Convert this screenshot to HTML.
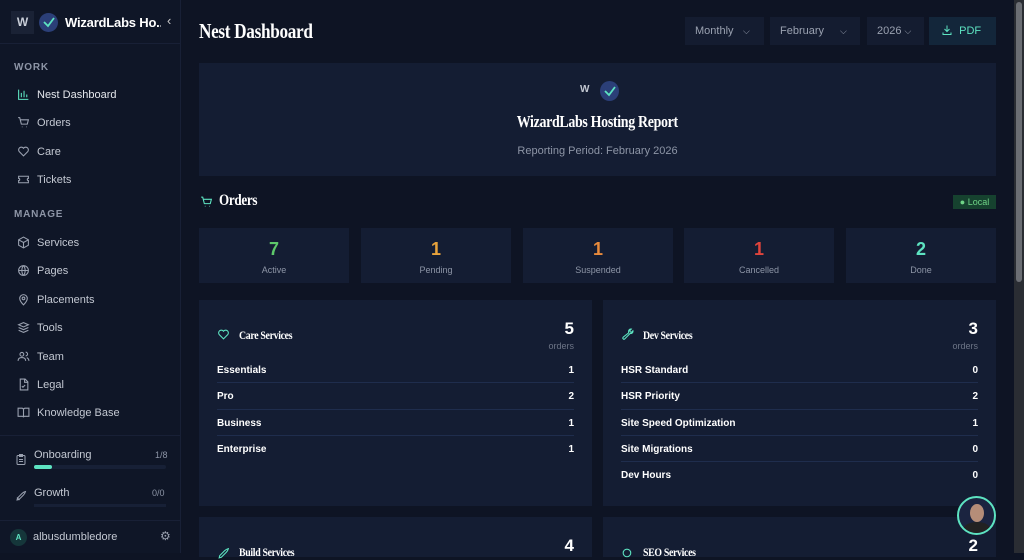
<!DOCTYPE html>
<html><head><meta charset="utf-8"><style>
*{box-sizing:border-box;margin:0;padding:0}
body{width:1024px;height:553px;overflow:hidden;background:#0e1424;font-family:"Liberation Sans",sans-serif;color:#d5d9e2;position:relative}
.sb{position:absolute;left:0;top:0;width:181px;height:553px;background:#0f1627;border-right:1px solid #182036}
.logo{position:absolute;top:11px;left:11px;width:23px;height:23px;background:#1a2235;color:#c9ced8;font-weight:bold;font-size:12px;text-align:center;line-height:23px}
.lc{position:absolute;top:13px;left:39px;width:19px;height:19px;border-radius:50%;background:#2b3f78}
.brand{position:absolute;top:15px;left:65px;font-weight:bold;font-size:13px;color:#fff;width:96px;white-space:nowrap;overflow:hidden;letter-spacing:-.2px}
.sec{position:absolute;left:14px;font-size:10px;letter-spacing:.8px;color:#8d95a6;font-weight:bold}
.it{position:absolute;left:17px;font-size:11px;color:#c3c8d2;display:flex;align-items:center}
.it svg{width:13px;height:13px;margin-right:7px;stroke:#9aa1b0;fill:none;stroke-width:2}
.serif{font-family:"Liberation Serif",serif;font-weight:bold;color:#fff;display:inline-block;transform:scaleX(.82);transform-origin:left;letter-spacing:-.4px;white-space:nowrap}
.ctr{transform-origin:center}
.btn{position:absolute;top:17px;height:28px;background:#141c30;font-size:11px;color:#9aa1b0;line-height:28px;padding-left:10px}
.card{position:absolute;background:#141d33}
.st{position:absolute;top:228px;width:150px;height:55px;background:#141d33;text-align:center}
.st b{display:block;font-size:18px;margin-top:11px;font-weight:900}
.st span{font-size:9px;color:#8d95a6}
.row{display:flex;justify-content:space-between;font-size:10px;font-weight:bold;color:#fff;height:26.3px;line-height:28px;border-bottom:1px solid #1f2d4d}
.row:last-child{border-bottom:none}
</style></head><body>
<div class="sb">
<div class="logo">W</div><div class="lc"><svg width="19" height="19"><path d="M5 9l4 4 6-8" stroke="#5de3c1" stroke-width="1.8" fill="none"/></svg></div>
<div class="brand">WizardLabs Ho...</div><div style="position:absolute;left:167px;top:13px;color:#ccc;font-size:13px">‹</div>
<div style="position:absolute;top:43px;left:0;width:181px;border-top:1px solid #182036"></div>
<div class="sec" style="top:62px">WORK</div>
<div class="it" style="top:88px;color:#e4e7ec"><svg viewBox="0 0 24 24" style="stroke:#5de3c1"><path d="M3 3v18h18M8 17V9M13 17V5M18 17v-5"/></svg>Nest Dashboard</div>
<div class="it" style="top:116px"><svg viewBox="0 0 24 24"><path d="M2 3h3l3 12h11l2-8H6M9 20h1M17 20h1"/></svg>Orders</div>
<div class="it" style="top:145px"><svg viewBox="0 0 24 24"><path d="M12 20l-8-8a5 5 0 018-6 5 5 0 018 6z"/></svg>Care</div>
<div class="it" style="top:173px"><svg viewBox="0 0 24 24"><path d="M3 6h18v4a2 2 0 000 4v4H3v-4a2 2 0 000-4z"/></svg>Tickets</div>
<div class="sec" style="top:209px">MANAGE</div>
<div class="it" style="top:236px"><svg viewBox="0 0 24 24"><path d="M12 2l9 5v10l-9 5-9-5V7zM3 7l9 5 9-5M12 12v10"/></svg>Services</div>
<div class="it" style="top:264px"><svg viewBox="0 0 24 24"><circle cx="12" cy="12" r="9"/><path d="M3 12h18M12 3c4 4 4 14 0 18M12 3c-4 4-4 14 0 18"/></svg>Pages</div>
<div class="it" style="top:293px"><svg viewBox="0 0 24 24"><path d="M12 22s7-7 7-12a7 7 0 00-14 0c0 5 7 12 7 12z"/><circle cx="12" cy="10" r="2.5"/></svg>Placements</div>
<div class="it" style="top:321px"><svg viewBox="0 0 24 24"><path d="M12 3l9 4-9 4-9-4zM3 12l9 4 9-4M3 17l9 4 9-4"/></svg>Tools</div>
<div class="it" style="top:350px"><svg viewBox="0 0 24 24"><circle cx="9" cy="8" r="3.5"/><path d="M2 20c0-4 3-6 7-6s7 2 7 6M16 4a3.5 3.5 0 010 7M22 20c0-3-2-5-4-6"/></svg>Team</div>
<div class="it" style="top:378px"><svg viewBox="0 0 24 24"><path d="M6 2h9l5 5v15H6zM14 2v6h6M9 15l2 2 4-4"/></svg>Legal</div>
<div class="it" style="top:406px"><svg viewBox="0 0 24 24"><path d="M2 4h7a3 3 0 013 3v14a2 2 0 00-2-2H2zM22 4h-7a3 3 0 00-3 3v14a2 2 0 012-2h8z"/></svg>Knowledge Base</div>
<div style="position:absolute;top:435px;left:0;width:181px;border-top:1px solid #182036"></div>
<svg style="position:absolute;left:15px;top:453px" width="12" height="13" viewBox="0 0 24 24" fill="none" stroke="#9aa1b0" stroke-width="2"><rect x="4" y="4" width="16" height="18" rx="2"/><path d="M9 2h6v4H9zM8 12h8M8 16h8"/></svg>
<div style="position:absolute;left:34px;top:449px;font-size:11px;color:#c3c8d2">Onboarding</div>
<div style="position:absolute;left:155px;top:450px;font-size:9px;color:#8d95a6">1/8</div>
<div style="position:absolute;left:34px;top:465px;width:132px;height:4px;background:#172036;border-radius:2px"><div style="width:18px;height:4px;background:#5de3c1;border-radius:2px"></div></div>
<svg style="position:absolute;left:15px;top:490px" width="12" height="12" viewBox="0 0 24 24" fill="none" stroke="#9aa1b0" stroke-width="2"><path d="M4 20l4-1 9-9c3-3 4-7 4-7s-4 1-7 4l-9 9zM4 15l5 5"/></svg>
<div style="position:absolute;left:34px;top:487px;font-size:11px;color:#c3c8d2">Growth</div>
<div style="position:absolute;left:152px;top:488px;font-size:9px;color:#8d95a6">0/0</div>
<div style="position:absolute;left:34px;top:504px;width:132px;height:3px;background:#172036"></div>
<div style="position:absolute;top:520px;left:0;width:181px;border-top:1px solid #182036"></div>
<div style="position:absolute;left:10px;top:529px;width:17px;height:17px;border-radius:50%;background:#15363a;color:#5de3c1;font-size:8px;text-align:center;line-height:17px;font-weight:bold">A</div>
<div style="position:absolute;left:33px;top:531px;font-size:11px;color:#c3c8d2">albusdumbledore</div>
<div style="position:absolute;left:160px;top:529px;font-size:12px;color:#9aa1b0">⚙</div>
</div>

<div class="serif" style="position:absolute;left:199px;top:19px;font-size:21px">Nest Dashboard</div>
<div class="btn" style="left:685px;width:79px">Monthly <span style="position:absolute;left:58px;font-size:9px">⌵</span></div>
<div class="btn" style="left:770px;width:90px">February <span style="position:absolute;left:70px;font-size:9px">⌵</span></div>
<div class="btn" style="left:867px;width:57px">2026 <span style="font-size:9px">⌵</span></div>
<div class="btn" style="left:929px;width:67px;background:#13263a;color:#5de3c1;padding-left:12px"><svg width="12" height="12" viewBox="0 0 24 24" fill="none" stroke="#5de3c1" stroke-width="2" style="vertical-align:-2px"><path d="M12 3v12M7 10l5 5 5-5M4 17v4h16v-4"/></svg>&nbsp;&nbsp;PDF</div>

<div class="card" style="left:199px;top:63px;width:797px;height:113px">
<div style="position:absolute;left:381px;top:21px;font-size:10px;font-weight:bold;color:#c3c8d2">W</div>
<div style="position:absolute;left:401px;top:18px;width:19px;height:20px;border-radius:50%;background:#2b3f78"><svg width="19" height="20"><path d="M5 10l4 4 6-8" stroke="#5de3c1" stroke-width="1.8" fill="none"/></svg></div>
<div style="position:absolute;left:0;width:797px;text-align:center;top:49px"><span class="serif ctr" style="font-size:17px">WizardLabs Hosting Report</span></div>
<div style="position:absolute;left:0;width:797px;text-align:center;top:82px;font-size:11px;color:#8d95a6">Reporting Period: February 2026</div>
</div>

<svg style="position:absolute;left:200px;top:195px" width="13" height="14" viewBox="0 0 24 24" fill="none" stroke="#5de3c1" stroke-width="2"><path d="M2 3h3l3 12h11l2-8H6M9 20h1M17 20h1"/></svg>
<div class="serif" style="position:absolute;left:219px;top:192px;font-size:16px">Orders</div>
<div style="position:absolute;left:953px;top:195px;width:43px;height:14px;background:#16422f;color:#6fd487;font-size:9px;line-height:14px;text-align:center">● Local</div>

<div class="st" style="left:199px"><b style="color:#5dc86a">7</b><span>Active</span></div>
<div class="st" style="left:361px"><b style="color:#e8a33c">1</b><span>Pending</span></div>
<div class="st" style="left:523px"><b style="color:#e88a3c">1</b><span>Suspended</span></div>
<div class="st" style="left:684px"><b style="color:#e0443c">1</b><span>Cancelled</span></div>
<div class="st" style="left:846px"><b style="color:#5de3c1">2</b><span>Done</span></div>

<div class="card" style="left:199px;top:300px;width:393px;height:206px;padding:0 18px">
<svg style="position:absolute;left:18px;top:28px" width="13" height="13" viewBox="0 0 24 24" fill="none" stroke="#5de3c1" stroke-width="2"><path d="M12 20l-8-8a5 5 0 018-6 5 5 0 018 6z"/></svg>
<div class="serif" style="position:absolute;left:40px;top:28px;font-size:12px">Care Services</div>
<div style="position:absolute;right:18px;top:19px;font-size:17px;font-weight:900;color:#fff">5</div>
<div style="position:absolute;right:18px;top:41px;font-size:9px;color:#6d7587">orders</div>
<div style="margin-top:57px">
<div class="row"><span>Essentials</span><span>1</span></div><div class="row"><span>Pro</span><span>2</span></div><div class="row"><span>Business</span><span>1</span></div><div class="row"><span>Enterprise</span><span>1</span></div></div>
</div>
<div class="card" style="left:603px;top:300px;width:393px;height:206px;padding:0 18px">
<svg style="position:absolute;left:18px;top:28px" width="13" height="13" viewBox="0 0 24 24" fill="none" stroke="#5de3c1" stroke-width="2"><path d="M14 6a4 4 0 015-4l-3 3 1 2 2 1 3-3a4 4 0 01-5 5L7 20a2 2 0 01-3-3l10-8z"/></svg>
<div class="serif" style="position:absolute;left:40px;top:28px;font-size:12px">Dev Services</div>
<div style="position:absolute;right:18px;top:19px;font-size:17px;font-weight:900;color:#fff">3</div>
<div style="position:absolute;right:18px;top:41px;font-size:9px;color:#6d7587">orders</div>
<div style="margin-top:57px">
<div class="row"><span>HSR Standard</span><span>0</span></div><div class="row"><span>HSR Priority</span><span>2</span></div><div class="row"><span>Site Speed Optimization</span><span>1</span></div><div class="row"><span>Site Migrations</span><span>0</span></div><div class="row"><span>Dev Hours</span><span>0</span></div></div>
</div>
<div class="card" style="left:199px;top:517px;width:393px;height:40px">
<svg style="position:absolute;left:18px;top:30px" width="13" height="13" viewBox="0 0 24 24" fill="none" stroke="#5de3c1" stroke-width="2"><path d="M4 20l4-1 9-9c3-3 4-7 4-7s-4 1-7 4l-9 9z"/></svg>
<div class="serif" style="position:absolute;left:40px;top:28px;font-size:12px">Build Services</div>
<div style="position:absolute;right:18px;top:19px;font-size:17px;font-weight:900;color:#fff">4</div></div>
<div class="card" style="left:603px;top:517px;width:393px;height:40px">
<svg style="position:absolute;left:18px;top:30px" width="13" height="13" viewBox="0 0 24 24" fill="none" stroke="#5de3c1" stroke-width="2"><circle cx="11" cy="11" r="7"/></svg>
<div class="serif" style="position:absolute;left:40px;top:28px;font-size:12px">SEO Services</div>
<div style="position:absolute;right:18px;top:19px;font-size:17px;font-weight:900;color:#fff">2</div></div>

<div style="position:absolute;left:957px;top:496px;width:39px;height:39px;border-radius:50%;border:2px solid #5de3c1;background:#1b2440;overflow:hidden"><div style="position:absolute;left:11px;top:6px;width:14px;height:18px;border-radius:50%;background:#b58d78"></div><div style="position:absolute;left:4px;top:24px;width:28px;height:16px;border-radius:50% 50% 0 0;background:#222"></div></div>

<div style="position:absolute;left:1014px;top:0;width:10px;height:553px;background:#2a2d33"><div style="position:absolute;left:2px;top:2px;width:6px;height:280px;background:#6b6e74;border-radius:3px"></div></div>
</body></html>
